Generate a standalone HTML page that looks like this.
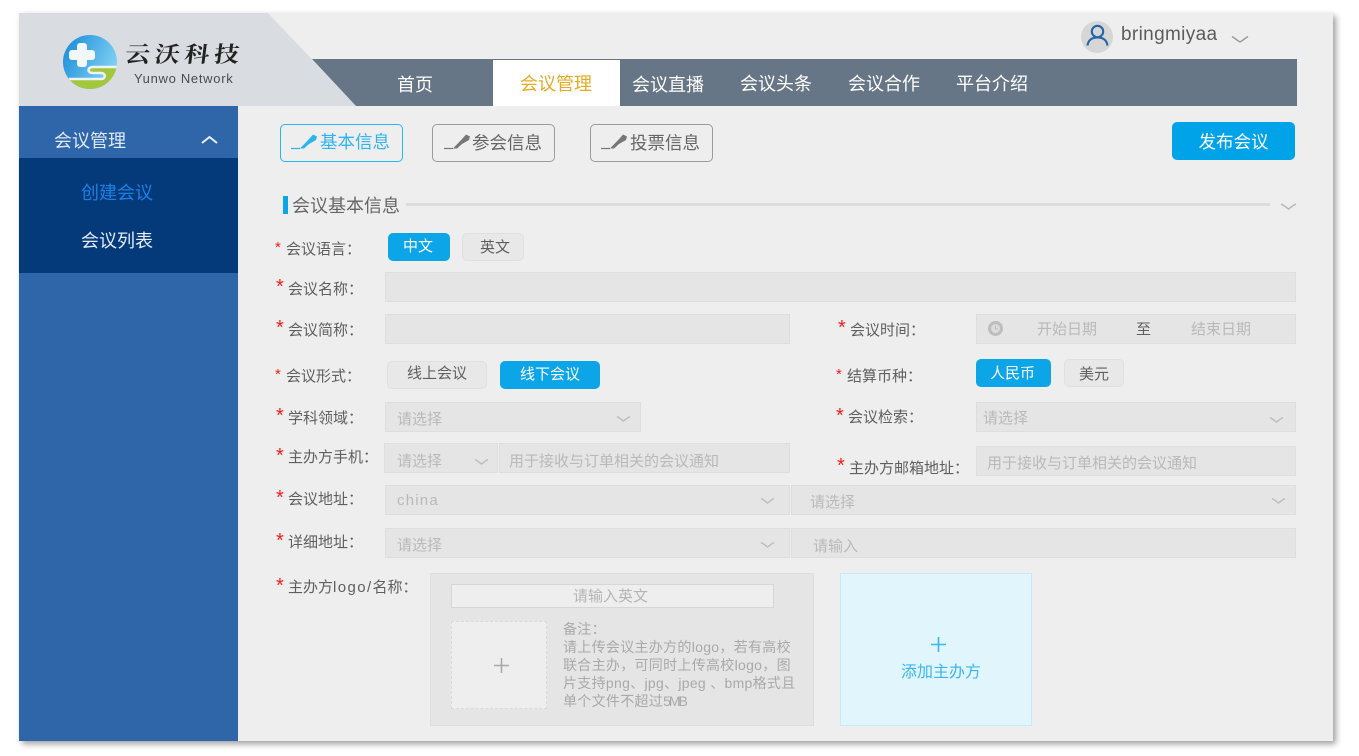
<!DOCTYPE html>
<html lang="zh">
<head>
<meta charset="utf-8">
<title>会议管理</title>
<style>
html,body{margin:0;padding:0;background:#fff;width:1359px;height:756px;overflow:hidden}
body{position:relative;font-family:"Liberation Sans","Noto Sans CJK SC",sans-serif;color:#666}
div,span{position:absolute;box-sizing:border-box;white-space:nowrap}
svg{position:absolute;display:block;overflow:visible}
b{font-weight:normal}
.t{line-height:20px;height:20px}
.l{font-size:15px;color:#5f5f5f}
.s{font-size:20px;color:#f21c1c;line-height:20px;height:20px}
.f{background:#e5e5e5;border:1px solid #dedede}
.ph{font-size:15px;color:#b9b9b9}
.btn{border-radius:5px;font-size:15px;text-align:center;line-height:28px;height:28px}
.on{background:#0ba5e8;color:#fff}
.off{background:#e8e8e8;border:1px solid #e0e0e0;color:#5f5f5f}
.tab{height:38px;border-radius:5px;border:1px solid #9b9b9b;background:transparent}
.tt{font-size:17.5px;color:#666}
.nav{font-size:18px;color:#fff}
</style>
</head>
<body>
<div style="left:19px;top:13px;width:1314px;height:728px;background:#eeeeee;box-shadow:3px 3px 6px rgba(0,0,0,.38)"></div>

<!-- header shapes -->
<svg style="left:0;top:0" width="1359" height="110">
<polygon points="19,13 268,13 356,106 19,106" fill="#d9dce0"/>
<polygon points="312,59 1297,59 1297,106 356,106" fill="#677687"/>
</svg>

<!-- logo -->
<svg style="left:63px;top:35px" width="55" height="55" viewBox="0 0 55 55">
<defs>
<linearGradient id="g" x1="0" y1="0" x2="1" y2=".5"><stop offset="0" stop-color="#1487d6"/><stop offset="1" stop-color="#7fd0f4"/></linearGradient>
<clipPath id="c"><circle cx="27" cy="27" r="27"/></clipPath>
</defs>
<circle cx="27" cy="27" r="27" fill="url(#g)"/>
<g clip-path="url(#c)">
<path d="M0 43H38C44 43 44 37 38 37H30C25 37 25 33 30 33H55V55H0Z" fill="#a2c73c"/>
<path d="M56 32H30C24 32 24 38 30 38H38C43 38 43 44 38 44H6" fill="none" stroke="#eef3f5" stroke-width="2.500"/>
</g>
<rect x="14" y="8" width="10" height="24" rx="3" fill="#f2f7f9"/>
<rect x="6" y="15" width="26" height="10" rx="3" fill="#f2f7f9"/>
</svg>
<span style="left:127px;top:39px;font-family:'Noto Serif CJK SC',serif;font-weight:700;font-size:25px;line-height:32px;letter-spacing:4.700px;color:#222;transform:scaleY(.88) skewX(-6deg);transform-origin:left top">云沃科技</span>
<span class="t" style="left:134px;top:69px;font-size:13px;color:#4c4c4c;letter-spacing:.7px">Yunwo Network</span>

<!-- user -->
<div style="left:1081px;top:21px;width:32px;height:32px;border-radius:50%;background:#d6d6d6"></div>
<svg style="left:1081px;top:21px" width="32" height="32" viewBox="0 0 32 32" fill="none" stroke="#2265a8" stroke-width="2.100">
<circle cx="16.500" cy="10.500" r="5.700"/><path d="M6.500 24.500c.8-5.500 4-8 10-8s9.200 2.500 10 8"/>
</svg>
<span class="t" style="left:1121px;top:25px;font-size:19px;color:#5c5c5c;line-height:20px;letter-spacing:.35px">bringmiyaa</span>
<svg style="left:1231px;top:35px" width="18" height="9" fill="none" stroke="#9a9a9a" stroke-width="1.500"><path d="M1 1.500C5 4 7 6 9 7C11 6 13 4 17 1.500"/></svg>

<!-- nav -->
<div style="left:493px;top:60px;width:127px;height:46px;background:#fff"></div>
<span class="t nav" style="left:397px;top:75px">首页</span>
<span class="t nav" style="left:520px;top:74px;color:#e3ab24">会议管理</span>
<span class="t nav" style="left:632px;top:75px">会议直播</span>
<span class="t nav" style="left:740px;top:74px">会议头条</span>
<span class="t nav" style="left:848px;top:74px">会议合作</span>
<span class="t nav" style="left:956px;top:74px">平台介绍</span>

<!-- sidebar -->
<div style="left:19px;top:106px;width:219px;height:635px;background:#2f66a9"></div>
<div style="left:19px;top:158px;width:219px;height:115px;background:#053a7a"></div>
<span class="t" style="left:54px;top:131px;font-size:18px;color:#dfe9f5">会议管理</span>
<svg style="left:201px;top:135px" width="17" height="9" fill="none" stroke="#e6eef8" stroke-width="2"><path d="M1 8L8.500 2L16 8"/></svg>
<span class="t" style="left:81px;top:183px;font-size:18px;color:#1a80e6">创建会议</span>
<span class="t" style="left:81px;top:231px;font-size:18px;color:#e3ecf7">会议列表</span>

<!-- tabs -->
<div class="tab" style="left:280px;top:124px;width:123px;border-color:#28b5f0"></div>
<svg style="left:291px;top:133px" width="27" height="18"><path d="M0 15.500H9" stroke="#28b5f0" stroke-width="1.200"/><path d="M9 15.500L19 5L22 1.500L26 3.500L25 7L18 11L13 15.500Z" fill="#28b5f0"/></svg>
<span class="t tt" style="left:320px;top:132px;color:#33b4ee">基本信息</span>
<div class="tab" style="left:432px;top:124px;width:123px"></div>
<svg style="left:444px;top:133px" width="27" height="18"><path d="M0 15.500H9" stroke="#777" stroke-width="1.200"/><path d="M9 15.500L19 5L22 1.500L26 3.500L25 7L18 11L13 15.500Z" fill="#777"/></svg>
<span class="t tt" style="left:472px;top:133px">参会信息</span>
<div class="tab" style="left:590px;top:124px;width:123px"></div>
<svg style="left:601px;top:133px" width="27" height="18"><path d="M0 15.500H9" stroke="#777" stroke-width="1.200"/><path d="M9 15.500L19 5L22 1.500L26 3.500L25 7L18 11L13 15.500Z" fill="#777"/></svg>
<span class="t tt" style="left:630px;top:133px">投票信息</span>
<div style="left:1172px;top:122px;width:123px;height:38px;border-radius:5px;background:#00a2e8;color:#fff;font-size:17.500px;line-height:40px;text-align:center">发布会议</div>

<!-- section -->
<div style="left:283px;top:196px;width:5px;height:18px;background:#0ba5e8"></div>
<span class="t" style="left:292px;top:196px;font-size:18px;color:#666">会议基本信息</span>
<div style="left:406px;top:203px;width:864px;height:3px;background:#dcdcdc"></div>
<svg style="left:1280px;top:202px" width="17" height="9" fill="none" stroke="#b5b5b5" stroke-width="1.500"><path d="M1 2C5 4 7 6 8.500 7C10 6 12 4 16 2"/></svg>

<!-- row 1 -->
<span class="s" style="left:275px;top:238px;font-size:15px">*</span>
<span class="t l" style="left:286px;top:240px">会议语言：</span>
<div class="btn on" style="left:388px;top:233px;width:62px;padding-right:2px">中文</div>
<div class="btn off" style="left:462px;top:233px;width:62px;padding-left:4px">英文</div>

<span class="s" style="left:276px;top:277px">*</span>
<span class="t l" style="left:288px;top:280px">会议名称：</span>
<div class="f" style="left:385px;top:272px;width:911px;height:30px"></div>

<span class="s" style="left:276px;top:318px">*</span>
<span class="t l" style="left:288px;top:321px">会议简称：</span>
<div class="f" style="left:385px;top:314px;width:405px;height:30px"></div>

<span class="s" style="left:838px;top:318px">*</span>
<span class="t l" style="left:850px;top:321px">会议时间：</span>
<div class="f" style="left:976px;top:314px;width:320px;height:30px"></div>
<svg style="left:988px;top:321px" width="15" height="15"><circle cx="7.500" cy="7.500" r="6" fill="#dcdcdc" stroke="#bdbdbd" stroke-width="3"/><path d="M7.500 4.500V8H10" fill="none" stroke="#bdbdbd"/></svg>
<span class="t ph" style="left:1037px;top:320px">开始日期</span>
<span class="t l" style="left:1136px;top:320px">至</span>
<span class="t ph" style="left:1191px;top:320px">结束日期</span>

<span class="s" style="left:275px;top:365px;font-size:15px">*</span>
<span class="t l" style="left:286px;top:367px">会议形式：</span>
<div class="btn off" style="left:387px;top:361px;width:100px;line-height:24px">线上会议</div>
<div class="btn on" style="left:500px;top:361px;width:100px;line-height:28px">线下会议</div>

<span class="s" style="left:836px;top:365px;font-size:15px">*</span>
<span class="t l" style="left:847px;top:367px">结算币种：</span>
<div class="btn on" style="left:976px;top:359px;width:75px;line-height:30px;padding-right:2px">人民币</div>
<div class="btn off" style="left:1064px;top:359px;width:60px;line-height:30px">美元</div>

<span class="s" style="left:276px;top:406px">*</span>
<span class="t l" style="left:288px;top:409px">学科领域：</span>
<div class="f" style="left:385px;top:402px;width:256px;height:30px"></div>
<span class="t ph" style="left:397px;top:410px">请选择</span>
<svg style="left:616px;top:415px" width="15" height="8" fill="none" stroke="#bdbdbd" stroke-width="1.500"><path d="M1 1.500C4 3 6 5 7.500 6C9 5 11 3 14 1.500"/></svg>

<span class="s" style="left:836px;top:406px">*</span>
<span class="t l" style="left:848px;top:408px">会议检索：</span>
<div class="f" style="left:976px;top:402px;width:320px;height:30px"></div>
<span class="t ph" style="left:983px;top:409px">请选择</span>
<svg style="left:1269px;top:416px" width="15" height="8" fill="none" stroke="#bdbdbd" stroke-width="1.500"><path d="M1 1.500C4 3 6 5 7.500 6C9 5 11 3 14 1.500"/></svg>

<span class="s" style="left:276px;top:446px">*</span>
<span class="t l" style="left:288px;top:448px">主办方手机：</span>
<div class="f" style="left:384px;top:443px;width:114px;height:30px"></div>
<div class="f" style="left:499px;top:443px;width:291px;height:30px"></div>
<span class="t ph" style="left:397px;top:452px">请选择</span>
<svg style="left:474px;top:458px" width="15" height="8" fill="none" stroke="#bdbdbd" stroke-width="1.500"><path d="M1 1.500C4 3 6 5 7.500 6C9 5 11 3 14 1.500"/></svg>
<span class="t ph" style="left:509px;top:452px">用于接收与订单相关的会议通知</span>

<span class="s" style="left:837px;top:456px">*</span>
<span class="t l" style="left:849px;top:459px">主办方邮箱地址：</span>
<div class="f" style="left:976px;top:446px;width:320px;height:30px"></div>
<span class="t ph" style="left:987px;top:454px">用于接收与订单相关的会议通知</span>

<span class="s" style="left:276px;top:488px">*</span>
<span class="t l" style="left:288px;top:490px">会议地址：</span>
<div class="f" style="left:385px;top:485px;width:405px;height:30px"></div>
<div class="f" style="left:791px;top:485px;width:505px;height:30px"></div>
<span class="t ph" style="left:397px;top:491px;letter-spacing:1.200px">china</span>
<span class="t ph" style="left:810px;top:493px">请选择</span>
<svg style="left:760px;top:497px" width="15" height="8" fill="none" stroke="#bdbdbd" stroke-width="1.500"><path d="M1 1.500C4 3 6 5 7.500 6C9 5 11 3 14 1.500"/></svg>
<svg style="left:1271px;top:497px" width="15" height="8" fill="none" stroke="#bdbdbd" stroke-width="1.500"><path d="M1 1.500C4 3 6 5 7.500 6C9 5 11 3 14 1.500"/></svg>

<span class="s" style="left:276px;top:531px">*</span>
<span class="t l" style="left:288px;top:533px">详细地址：</span>
<div class="f" style="left:385px;top:528px;width:405px;height:30px"></div>
<div class="f" style="left:791px;top:528px;width:505px;height:30px"></div>
<span class="t ph" style="left:397px;top:536px">请选择</span>
<span class="t ph" style="left:813px;top:537px">请输入</span>
<svg style="left:760px;top:541px" width="15" height="8" fill="none" stroke="#bdbdbd" stroke-width="1.500"><path d="M1 1.500C4 3 6 5 7.500 6C9 5 11 3 14 1.500"/></svg>

<span class="s" style="left:276px;top:576px">*</span>
<span class="t l" style="left:288px;top:578px">主办方<b style="letter-spacing:1.400px">logo/</b>名称：</span>
<div class="f" style="left:430px;top:573px;width:384px;height:153px"></div>
<div style="left:451px;top:584px;width:323px;height:24px;background:#eeeeee;border:1px solid #d6d6d6;text-align:center;font-size:15px;line-height:24px;color:#b5b5b5;padding-right:4px">请输入英文</div>
<div style="left:451px;top:621px;width:96px;height:88px;background:#eeeeee;border:1px dashed #dadada"></div>
<svg style="left:494px;top:658px" width="15" height="15"><path d="M7.500 0V15M0 7.500H15" stroke="#a8a8a8" stroke-width="1.500"/></svg>
<div style="left:563px;top:620px;width:240px;font-size:14px;letter-spacing:.3px;line-height:18px;color:#a9a9a9;white-space:nowrap">备注：<br>请上传会议主办方的logo，若有高校<br>联合主办，可同时上传高校logo，图<br>片支持png、jpg、jpeg 、bmp格式且<br>单个文件不超过<b style="letter-spacing:-2px">5MB</b></div>
<div style="left:840px;top:573px;width:192px;height:153px;background:#e1f5fd;border:1px solid #c8e9f6"></div>
<svg style="left:931px;top:637px" width="15" height="15"><path d="M7.500 0V15M0 7.500H15" stroke="#3ab7ec" stroke-width="1.600"/></svg>
<span class="t" style="left:901px;top:663px;font-size:16px;color:#3ab7ec">添加主办方</span>
</body>
</html>
